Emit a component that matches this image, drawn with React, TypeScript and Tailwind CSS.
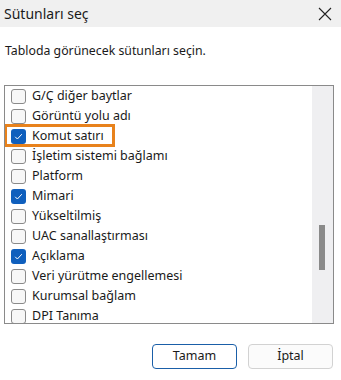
import React from "react";

const items: { label: string; checked: boolean; highlight?: boolean }[] = [
  { label: "G/Ç diğer baytlar", checked: false },
  { label: "Görüntü yolu adı", checked: false },
  { label: "Komut satırı", checked: true, highlight: true },
  { label: "İşletim sistemi bağlamı", checked: false },
  { label: "Platform", checked: false },
  { label: "Mimari", checked: true },
  { label: "Yükseltilmiş", checked: false },
  { label: "UAC sanallaştırması", checked: false },
  { label: "Açıklama", checked: true },
  { label: "Veri yürütme engellemesi", checked: false },
  { label: "Kurumsal bağlam", checked: false },
  { label: "DPI Tanıma", checked: false },
];

function Box({ checked }: { checked: boolean }) {
  if (checked) {
    return (
      <div className="w-[15px] h-[15px] rounded-[3px] bg-[#0f5fbd] flex items-center justify-center shrink-0">
        <svg width="11" height="11" viewBox="0 0 11 11">
          <path d="M2.2 5.8 L4.4 8 L8.8 3.2" fill="none" stroke="#fff" strokeWidth="1" />
        </svg>
      </div>
    );
  }
  return <div className="w-[15px] h-[15px] rounded-[3px] border border-[#8a8a8a] bg-[#f7f7f7] shrink-0" />;
}

export default function App() {
  return (
    <div
      className="w-[341px] h-[380px] bg-white relative overflow-hidden text-[#1a1a1a]"
      style={{ fontFamily: '"Noto Sans", "Open Sans", sans-serif' }}
    >
      <div className="h-[27px] bg-[#f0f0f0] flex items-center justify-between pl-[4px] pr-[9px]">
        <span className="text-[14px] leading-none">Sütunları seç</span>
        <svg width="14" height="14" viewBox="0 0 14 14">
          <path d="M1 1 L13 13 M13 1 L1 13" stroke="#222" strokeWidth="1.1" fill="none" />
        </svg>
      </div>
      <div className="pl-[5px] pt-[15px] text-[12.3px] leading-[18px]">Tabloda görünecek sütunları seçin.</div>
      <div className="ml-[4px] mt-[25px] w-[330px] h-[239px] border border-[#8a8a8a] flex">
        <div className="flex-1 overflow-hidden">
          {items.map((it) => (
            <div key={it.label} className="relative h-[20px] flex items-center pl-[6px] gap-[6px] text-[12.5px] whitespace-nowrap">
              <Box checked={it.checked} />
              <span className="leading-none">{it.label}</span>
              {it.highlight && (
                <div className="absolute left-[-1px] top-[-2px] w-[111px] h-[23px] border-[3px] border-[#e8821c]" />
              )}
            </div>
          ))}
        </div>
        <div className="w-[21px] bg-[#efeff1] relative">
          <div className="absolute left-[7px] top-[139px] w-[6px] h-[45px] bg-[#8a8a8a]" />
        </div>
      </div>
      <div className="flex justify-end gap-[11px] pr-[8px] mt-[20px]">
        <button className="w-[85px] h-[25px] rounded-[4px] border border-[#1a5fa8] bg-white text-[12.5px] leading-none">
          Tamam
        </button>
        <button className="w-[85px] h-[25px] rounded-[4px] border border-[#d2d2d2] bg-[#fbfbfb] text-[12.5px] leading-none">
          İptal
        </button>
      </div>
    </div>
  );
}
